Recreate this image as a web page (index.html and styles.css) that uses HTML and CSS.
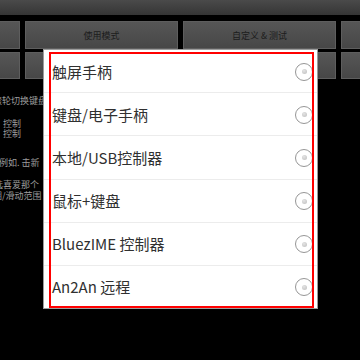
FILE: index.html
```html
<!DOCTYPE html>
<html>
<head>
<meta charset="utf-8">
<link rel="stylesheet" href="styles.css">
</head>
<body>
<div class="screen">
  <div class="topbar"></div>
  <div class="btnrow row1">
    <div class="btn"></div>
    <div class="btn">使用模式</div>
    <div class="btn">自定义 &amp; 测试</div>
    <div class="btn"></div>
  </div>
  <div class="btnrow row2">
    <div class="btn"></div>
    <div class="btn"></div>
    <div class="btn"></div>
    <div class="btn"></div>
  </div>
  <div class="side">
    <div class="line l1">滚轮切换键盘</div>
    <div class="line l2">控制</div>
    <div class="line l3">控制</div>
    <div class="line l4">例如. 击新</div>
    <div class="line l5">选喜爱那个</div>
    <div class="line l6">圈/滑动范围</div>
  </div>

  <div class="dialog">
    <div class="item"><span>触屏手柄</span><i class="radio"></i></div>
    <div class="item"><span>键盘/电子手柄</span><i class="radio"></i></div>
    <div class="item"><span>本地/USB控制器</span><i class="radio"></i></div>
    <div class="item"><span>鼠标+键盘</span><i class="radio"></i></div>
    <div class="item"><span>BluezIME 控制器</span><i class="radio"></i></div>
    <div class="item last"><span>An2An 远程</span><i class="radio"></i></div>
    <div class="highlight"></div>
  </div>
</div>
</body>
</html>
```
FILE: styles.css
```css
html, body {
  margin: 0;
  padding: 0;
  background: #000;
}
.screen {
  position: relative;
  width: 360px;
  height: 360px;
  overflow: hidden;
  background: #000;
  font-family: "Noto Sans CJK SC", "Noto Sans", sans-serif;
}
.topbar {
  height: 15px;
  background: linear-gradient(#4a4a4a, #353535);
}
.btnrow {
  display: flex;
  gap: 5px;
  margin-left: -133px;
}
.row1 {
  margin-top: 6px;
  height: 28px;
}
.row2 {
  margin-top: 3px;
  height: 27px;
}
.btn {
  flex: 0 0 153px;
  box-sizing: border-box;
  background: linear-gradient(#565656, #474747);
  border: 1px solid #5e5e5e;
  display: flex;
  align-items: center;
  justify-content: center;
  font-size: 9px;
  color: #1c1c1c;
}
.side {
  color: #9c9c9c;
  font-size: 9px;
  line-height: 10px;
  padding-top: 17px;
}
.line {
  white-space: nowrap;
}
.l1 { margin-left: -7px; }
.l2 { margin-left: 3px; margin-top: 13px; }
.l3 { margin-left: 3px; margin-top: 0px; }
.l4 { margin-left: -1px; margin-top: 19px; }
.l5 { margin-left: -6px; margin-top: 12px; }
.l6 { margin-left: -7px; margin-top: 1px; }

.dialog {
  position: absolute;
  left: 43px;
  top: 49px;
  width: 275px;
  height: 260px;
  box-sizing: border-box;
  background: #fff;
  border: 1px solid #9c9c9c;
  display: flex;
  flex-direction: column;
}
.item {
  flex: 1 1 0;
  display: flex;
  align-items: center;
  justify-content: space-between;
  padding: 0 4px 0 8px;
  border-bottom: 1px solid #ececec;
  font-size: 15px;
  color: #303030;
}
.item.last {
  border-bottom: none;
}
.radio {
  width: 16px;
  height: 16px;
  border: 1.2px solid #969696;
  border-radius: 50%;
  display: flex;
  align-items: center;
  justify-content: center;
  margin-top: 1px;
}
.radio::after {
  content: "";
  width: 5px;
  height: 5px;
  border-radius: 50%;
  background: radial-gradient(circle at 40% 35%, #e4e4e4, #bdbdbd);
}
.highlight {
  position: absolute;
  left: 5px;
  top: 2px;
  right: 3px;
  bottom: 0px;
  border: 2px solid #ff0000;
  pointer-events: none;
}
```
